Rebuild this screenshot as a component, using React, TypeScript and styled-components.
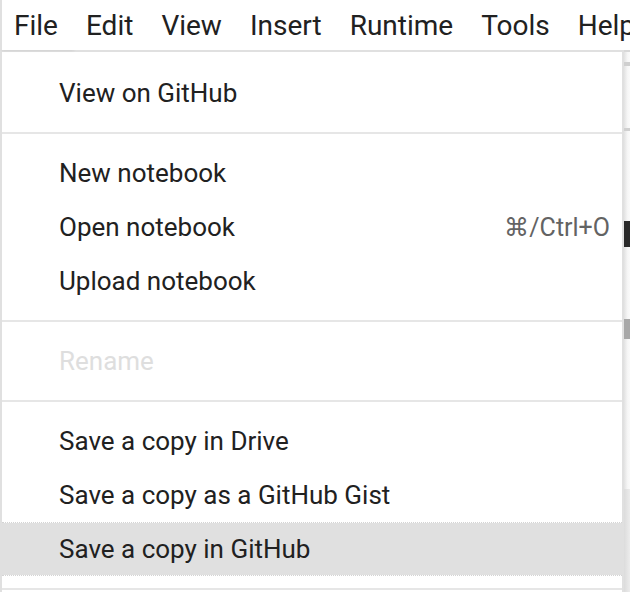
import React from "react";
import styled, { createGlobalStyle } from "styled-components";

const Global = createGlobalStyle`
  html, body { margin: 0; padding: 0; background: #ffffff; }
  body { font-family: Roboto, "Liberation Sans", Arial, sans-serif; overflow: hidden; }
`;

const Page = styled.div`
  width: 630px;
  height: 592px;
  overflow: hidden;
  display: flex;
  flex-direction: column;
  background: #ffffff;
`;

const MenuBar = styled.div`
  height: 50px;
  display: flex;
  align-items: stretch;
  flex-shrink: 0;
  position: relative;
  z-index: 2;
`;

const MenuButton = styled.div<{ $active?: boolean }>`
  display: flex;
  align-items: center;
  padding: 1px 14px 0 ${(p) => (p.$active ? "12px" : "14px")};
  font-size: 28px;
  color: #212121;
  white-space: nowrap;
  flex-shrink: 0;
  background: #ffffff;
  border-left: ${(p) => (p.$active ? "2px solid #e0e0e0" : "none")};
  box-shadow: ${(p) => (p.$active ? "2px 0 3px rgba(0,0,0,0.12)" : "none")};
`;

const Body = styled.div`
  flex: 1;
  display: flex;
  align-items: stretch;
  min-height: 0;
`;

const Dropdown = styled.div`
  width: 620px;
  flex-shrink: 0;
  border-left: 2px solid #e0e0e0;
  border-right: 2px solid #e0e0e0;
  border-top: 2px solid #e0e0e0;
  padding-top: 14px;
  background: #ffffff;
  display: flex;
  flex-direction: column;
`;

const Item = styled.div<{ $disabled?: boolean; $highlight?: boolean }>`
  height: 54px;
  flex-shrink: 0;
  box-sizing: border-box;
  display: flex;
  align-items: center;
  justify-content: space-between;
  padding: 0 12px 0 57px;
  font-size: 26px;
  color: ${(p) => (p.$disabled ? "#dedede" : "#212121")};
  background: ${(p) => (p.$highlight ? "#e0e0e0" : "transparent")};
  background-clip: padding-box;
  border-top: 1px dotted ${(p) => (p.$highlight ? "#d4d4d4" : "transparent")};
  border-bottom: 1px dotted ${(p) => (p.$highlight ? "#d4d4d4" : "transparent")};
  white-space: nowrap;
`;

const Shortcut = styled.span`
  font-size: 25px;
  color: #636363;
`;

const Separator = styled.div`
  height: 2px;
  margin: 12px 0;
  background: #e6e6e6;
  flex-shrink: 0;
`;

const Strip = styled.div`
  flex: 1;
  display: flex;
  flex-direction: column;
  background: linear-gradient(to right, #e2e2e2, #f6f6f6 60%, #fafafa);
  border-top: 2px solid #d8d8d8;
`;

const StripBit = styled.div<{ $h: number; $mt: number; $c: string }>`
  height: ${(p) => p.$h}px;
  margin-top: ${(p) => p.$mt}px;
  background: ${(p) => p.$c};
  flex-shrink: 0;
`;

const StripFill = styled.div`
  flex: 1;
  margin-top: 150px;
  background: linear-gradient(to right, #dcdcdc, #ececec);
`;

const menuNames = ["File", "Edit", "View", "Insert", "Runtime", "Tools", "Help"];

export default function App() {
  return (
    <Page>
      <Global />
      <MenuBar>
        {menuNames.map((n, i) => (
          <MenuButton key={n} $active={i === 0}>
            {n}
          </MenuButton>
        ))}
      </MenuBar>
      <Body>
        <Dropdown>
          <Item>View on GitHub</Item>
          <Separator />
          <Item>New notebook</Item>
          <Item>
            Open notebook<Shortcut>⌘/Ctrl+O</Shortcut>
          </Item>
          <Item>Upload notebook</Item>
          <Separator />
          <Item $disabled>Rename</Item>
          <Separator />
          <Item>Save a copy in Drive</Item>
          <Item>Save a copy as a GitHub Gist</Item>
          <Item $highlight>Save a copy in GitHub</Item>
          <Separator />
        </Dropdown>
        <Strip>
          <StripBit $h={4} $mt={10} $c="#cfcfcf" />
          <StripBit $h={3} $mt={62} $c="#d0d0d0" />
          <StripBit $h={26} $mt={90} $c="#2a2a2a" />
          <StripBit $h={20} $mt={72} $c="#a8a8a8" />
          <StripFill />
        </Strip>
      </Body>
    </Page>
  );
}
